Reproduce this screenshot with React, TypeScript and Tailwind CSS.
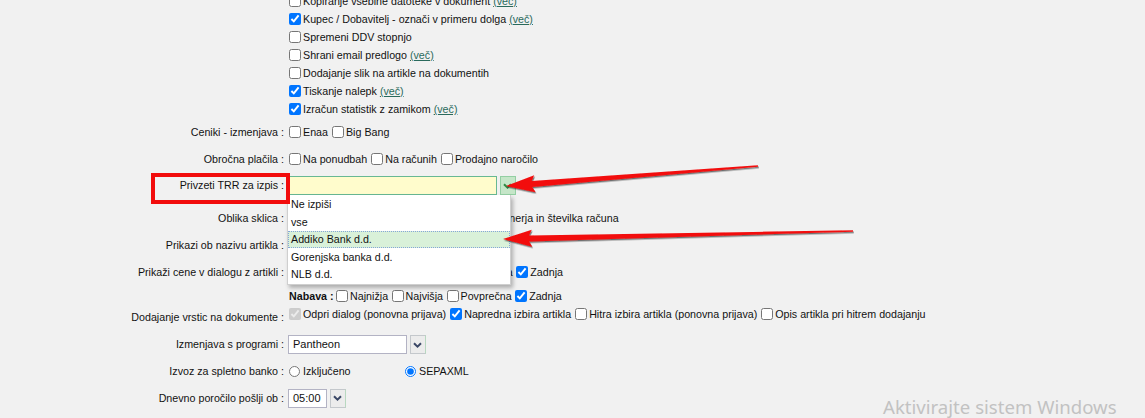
import React from "react";

const ff = "font-['Liberation_Sans',Arial,sans-serif]";

function Box({ checked = false, disabled = false }: { checked?: boolean; disabled?: boolean }) {
  return (
    <input
      type="checkbox"
      defaultChecked={checked}
      disabled={disabled}
      className="m-0 w-[12px] h-[12px] shrink-0"
    />
  );
}

function CB({
  children,
  checked = false,
  disabled = false,
  more = false,
  ml = "ml-[4px]",
}: {
  children: React.ReactNode;
  checked?: boolean;
  disabled?: boolean;
  more?: boolean;
  ml?: string;
}) {
  return (
    <span className={`inline-flex items-center whitespace-nowrap ${ml}`}>
      <Box checked={checked} disabled={disabled} />
      <span className="ml-[2px]">{children}</span>
      {more && (
        <span className="ml-[3px] text-[#2a6a5c] underline decoration-[#2a6a5c] underline-offset-[1px]">
          (več)
        </span>
      )}
    </span>
  );
}

function Radio({ children, checked = false, className = "" }: { children: React.ReactNode; checked?: boolean; className?: string }) {
  return (
    <span className={`inline-flex items-center whitespace-nowrap ${className}`}>
      <input type="radio" name="izvoz" defaultChecked={checked} className="m-0 w-[11px] h-[11px] shrink-0" />
      <span className="ml-[3px]">{children}</span>
    </span>
  );
}

function Row({
  label,
  children,
  className = "",
  labelClass = "",
}: {
  label?: string;
  children?: React.ReactNode;
  className?: string;
  labelClass?: string;
}) {
  return (
    <div className={`flex items-center ${className}`}>
      <div className={`w-[284px] shrink-0 text-right whitespace-nowrap ${labelClass}`}>{label ? `${label} :` : ""}</div>
      <div className="flex items-center whitespace-nowrap">{children}</div>
    </div>
  );
}

function Chevron({ color }: { color: string }) {
  return (
    <svg width="9" height="6" viewBox="0 0 9 6">
      <path d="M1 1.2 L4.5 4.6 L8 1.2" fill="none" stroke={color} strokeWidth="2" strokeLinejoin="miter" />
    </svg>
  );
}

function GraySelect({ value, w }: { value: string; w: string }) {
  return (
    <div className="flex items-stretch h-[19px] ml-[4px]">
      <div className={`${w} h-[19px] bg-white border border-[#b3b3c4] flex items-center pl-[4px] text-[11px]`}>{value}</div>
      <div className="w-[16px] h-[19px] ml-[2.5px] bg-[#ececec] border border-[#c4c8cc] border-r-[#b8d8c0] flex items-center justify-center">
        <Chevron color="#3a4766" />
      </div>
    </div>
  );
}

const dropItems = ["Ne izpiši", "vse", "Addiko Bank d.d.", "Gorenjska banka d.d.", "NLB d.d."];

function Arrow({ tx, ty, hx, hy }: { tx: number; ty: number; hx: number; hy: number }) {
  const dx = hx - tx;
  const dy = hy - ty;
  const L = Math.hypot(dx, dy);
  const ux = dx / L;
  const uy = dy / L;
  const px = -uy;
  const py = ux;
  const headLen = 26;
  const headHalf = 8.5;
  const w0 = 0.7;
  const w1 = 3;
  const bx = hx - ux * headLen;
  const by = hy - uy * headLen;
  const pts = [
    [tx + px * w0, ty + py * w0],
    [bx + px * w1, by + py * w1],
    [bx + px * headHalf - ux * 3, by + py * headHalf - uy * 3],
    [hx, hy],
    [bx - px * headHalf - ux * 3, by - py * headHalf - uy * 3],
    [bx - px * w1, by - py * w1],
    [tx - px * w0, ty - py * w0],
  ]
    .map((p) => `${p[0].toFixed(1)},${p[1].toFixed(1)}`)
    .join(" ");
  return <polygon points={pts} fill="#f20c0c" filter="url(#ash)" />;
}

export default function App() {
  return (
    <div className={`relative w-[1145px] h-[418px] overflow-hidden bg-[#f1f1f1] text-[10.7px] leading-none text-[#111] ${ff}`}>
      <div className="flex flex-col -mt-[7.7px]">
        <Row className="h-[18px]">
          <CB ml="ml-[5px]" more>Kopiranje vsebine datoteke v dokument</CB>
        </Row>
        <Row className="h-[18px]">
          <CB ml="ml-[5px]" checked more>Kupec / Dobavitelj - označi v primeru dolga</CB>
        </Row>
        <Row className="h-[18px]">
          <CB ml="ml-[5px]">Spremeni DDV stopnjo</CB>
        </Row>
        <Row className="h-[18px]">
          <CB ml="ml-[5px]" more>Shrani email predlogo</CB>
        </Row>
        <Row className="h-[18px]">
          <CB ml="ml-[5px]">Dodajanje slik na artikle na dokumentih</CB>
        </Row>
        <Row className="h-[18px]">
          <CB ml="ml-[5px]" checked more>Tiskanje nalepk</CB>
        </Row>
        <Row className="h-[18px]">
          <CB ml="ml-[5px]" checked more>Izračun statistik z zamikom</CB>
        </Row>

        <Row className="mt-[5px] h-[18px]" label="Ceniki - izmenjava">
          <CB ml="ml-[5px]">Enaa</CB>
          <CB>Big Bang</CB>
        </Row>

        <Row className="mt-[9px] h-[18px]" label="Obročna plačila">
          <CB ml="ml-[5px]">Na ponudbah</CB>
          <CB>Na računih</CB>
          <CB>Prodajno naročilo</CB>
        </Row>

        <Row className="mt-[8px] h-[19px]" label="Privzeti TRR za izpis">
          <div className="relative flex items-stretch h-[19px] ml-[3px]">
            <div className="w-[210px] h-full bg-[#fffccc] border border-[#68b893]" />
            <div className="w-[16px] h-full ml-[2.5px] bg-[#c5e6c8] border border-[#93cfa3] flex items-center justify-center">
              <Chevron color="#2f8a45" />
            </div>
            <div className="absolute left-0 top-full w-[224px] bg-white border border-t-0 border-[#cfcfcf] shadow-[2px_3px_4px_rgba(0,0,0,0.28)] z-10 flex flex-col pt-[0.5px] pb-[0.5px]">
              {dropItems.map((it) => (
                <div
                  key={it}
                  className={`h-[17.5px] flex items-center pl-[2px] ${
                    it === "Addiko Bank d.d." ? "bg-[#d9f1d9] border border-dotted border-[#86a6d8]" : "border border-transparent"
                  }`}
                >
                  {it}
                </div>
              ))}
            </div>
          </div>
        </Row>

        <Row className="mt-[14px] h-[18px]" label="Oblika sklica">
          <Radio className="ml-[5px] w-[163px]">SI00</Radio>
          <Radio>Šifra partnerja in številka računa</Radio>
        </Row>

        <Row className="mt-[8.7px] h-[18px]" label="Prikazi ob nazivu artikla">
          <CB ml="ml-[5px]">Šifro artikla</CB>
        </Row>

        <Row className="mt-[9.3px] h-[18px]" label="Prikaži cene v dialogu z artikli">
          <span className="ml-[5px] font-bold">Prodaja :</span>
          <CB ml="ml-[2.5px]">Najnižja</CB>
          <CB ml="ml-[3.5px]">Najvišja</CB>
          <CB ml="ml-[3.5px]">Povprečna</CB>
          <CB ml="ml-[3.5px]" checked>Zadnja</CB>
        </Row>

        <Row className="mt-[6px] h-[18px]">
          <span className="ml-[5px] font-bold">Nabava :</span>
          <CB ml="ml-[2.5px]">Najnižja</CB>
          <CB ml="ml-[3.5px]">Najvišja</CB>
          <CB ml="ml-[3.5px]">Povprečna</CB>
          <CB ml="ml-[3.5px]" checked>Zadnja</CB>
        </Row>

        <Row className="h-[18px]" label="Dodajanje vrstic na dokumente" labelClass="translate-y-[3px]">
          <CB ml="ml-[5px]" checked disabled>Odpri dialog (ponovna prijava)</CB>
          <CB checked>Napredna izbira artikla</CB>
          <CB>Hitra izbira artikla (ponovna prijava)</CB>
          <CB>Opis artikla pri hitrem dodajanju</CB>
        </Row>

        <Row className="mt-[11.7px] h-[19.3px]" label="Izmenjava s programi">
          <GraySelect value="Pantheon" w="w-[119px]" />
        </Row>

        <Row className="mt-[8.4px] h-[18px]" label="Izvoz za spletno banko">
          <Radio className="ml-[5px] w-[116px]">Izključeno</Radio>
          <Radio checked>SEPAXML</Radio>
        </Row>

        <Row className="mt-[8.6px] h-[18.4px]" label="Dnevno poročilo pošlji ob">
          <GraySelect value="05:00" w="w-[39px]" />
        </Row>
      </div>

      {/* red highlight box */}
      <div className="absolute left-[151px] top-[173px] w-[139px] h-[31px] border-[4.5px] border-[#f20c0c] z-20 pointer-events-none" />

      {/* arrows */}
      <svg className="absolute left-0 top-0 z-30 pointer-events-none" width="1145" height="418" viewBox="0 0 1145 418">
        <defs>
          <filter id="ash" x="-10%" y="-50%" width="120%" height="200%">
            <feDropShadow dx="0.8" dy="1.4" stdDeviation="0.7" floodColor="#000" floodOpacity="0.55" />
          </filter>
        </defs>
        <Arrow tx={758} ty={166} hx={506} hy={186} />
        <Arrow tx={853} ty={231} hx={503} hy={239} />
      </svg>

      {/* Windows watermark */}
      <div className="absolute left-[883px] top-[398px] font-['Noto_Sans',sans-serif] text-[18.6px] leading-none text-[#c2c2c2] whitespace-nowrap pointer-events-none">
        Aktivirajte sistem Windows
      </div>
    </div>
  );
}
